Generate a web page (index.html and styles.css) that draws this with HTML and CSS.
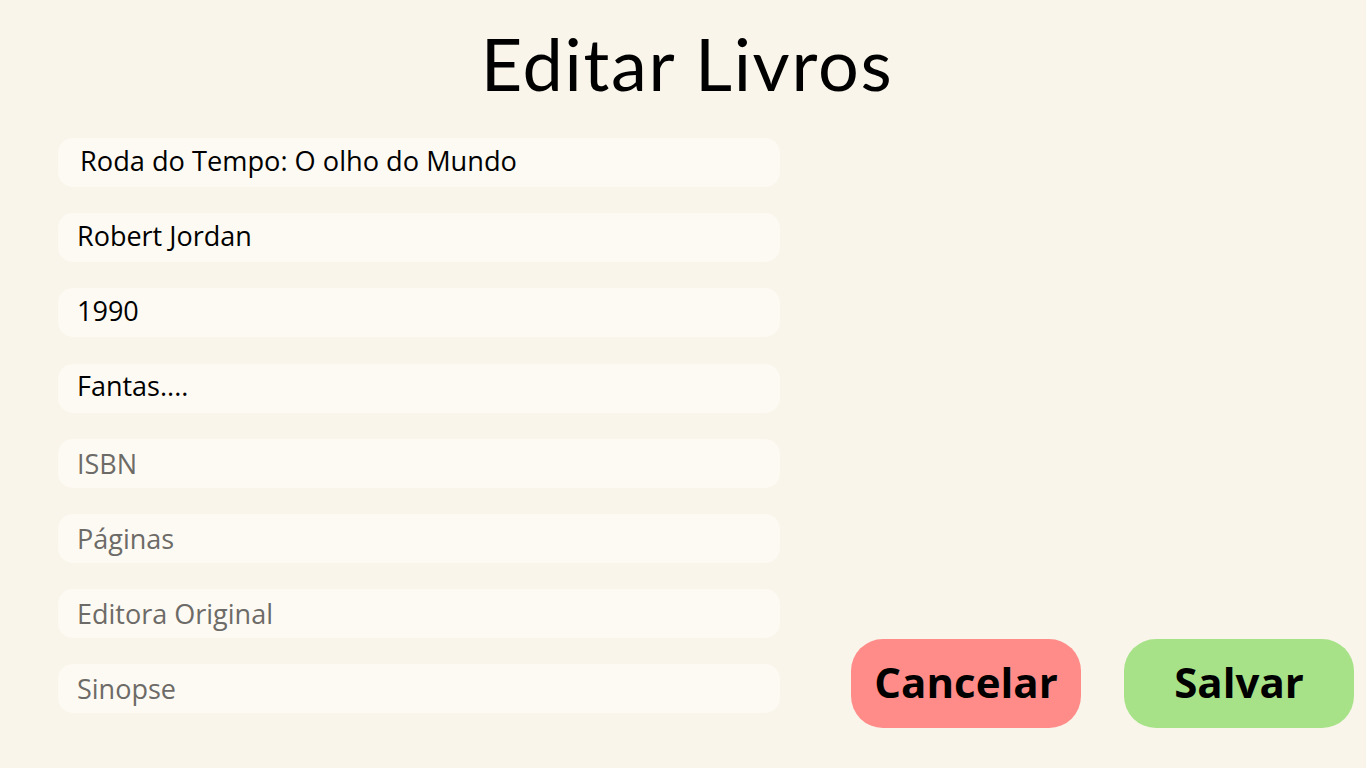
FILE: index.html
```html
<!DOCTYPE html>
<html lang="pt-BR">
<head>
<meta charset="utf-8">
<title>Editar Livros</title>
<link rel="stylesheet" href="styles.css">
</head>
<body>
<main class="page">
  <h1 class="title">Editar Livros</h1>
  <div class="content">
    <form class="fields">
      <input class="field field-first" type="text" value="Roda do Tempo: O olho do Mundo">
      <input class="field" type="text" value="Robert Jordan">
      <input class="field" type="text" value="1990">
      <input class="field" type="text" value="Fantas....">
      <input class="field field-empty" type="text" placeholder="ISBN">
      <input class="field field-empty" type="text" placeholder="Páginas">
      <input class="field field-empty" type="text" placeholder="Editora Original">
      <input class="field field-empty" type="text" placeholder="Sinopse">
    </form>
    <div class="actions">
      <button class="btn btn-cancel" type="button">Cancelar</button>
      <button class="btn btn-save" type="button">Salvar</button>
    </div>
  </div>
</main>
</body>
</html>
```

FILE: styles.css
```css
html, body {
  margin: 0;
  padding: 0;
  background: #f9f5eb;
}

.page {
  width: 1366px;
  height: 768px;
  box-sizing: border-box;
  padding: 23px 0 0 58px;
  font-family: "Open Sans", "Liberation Sans", sans-serif;
}

.title {
  margin: 0 0 0 -58px;
  text-align: center;
  font-family: "Lato", "Inter", sans-serif;
  font-weight: 400;
  font-size: 72px;
  line-height: 80px;
  letter-spacing: 1.7px;
  color: #000;
  padding-left: 8px;
}

.content {
  display: flex;
  align-items: flex-end;
  margin-top: 35px;
}

.fields {
  display: flex;
  flex-direction: column;
  gap: 26.2px;
  width: 722px;
  margin: 0;
  padding-bottom: 15px;
}

.field {
  box-sizing: border-box;
  height: 49px;
  width: 722px;
  border: none;
  outline: none;
  border-radius: 15px;
  background: #fdfaf3;
  padding: 0 0 5px 19px;
  font-family: "Open Sans", "Liberation Sans", sans-serif;
  font-size: 27px;
  color: #000;
}

.field-first {
  padding-left: 22px;
  font-size: 27.2px;
}

.field-empty {
  padding-bottom: 0;
}

.field::placeholder {
  color: #6d6b67;
  opacity: 1;
}

.actions {
  display: flex;
  gap: 43px;
  margin-left: 71px;
}

.btn {
  width: 230px;
  height: 89px;
  border: none;
  border-radius: 32px;
  font-family: "Open Sans", "Liberation Sans", sans-serif;
  font-weight: 700;
  font-size: 42px;
  color: #000;
  padding: 0 0 4px;
}

.btn-cancel {
  background: #ff8c88;
}

.btn-save {
  background: #a8e288;
}
```
